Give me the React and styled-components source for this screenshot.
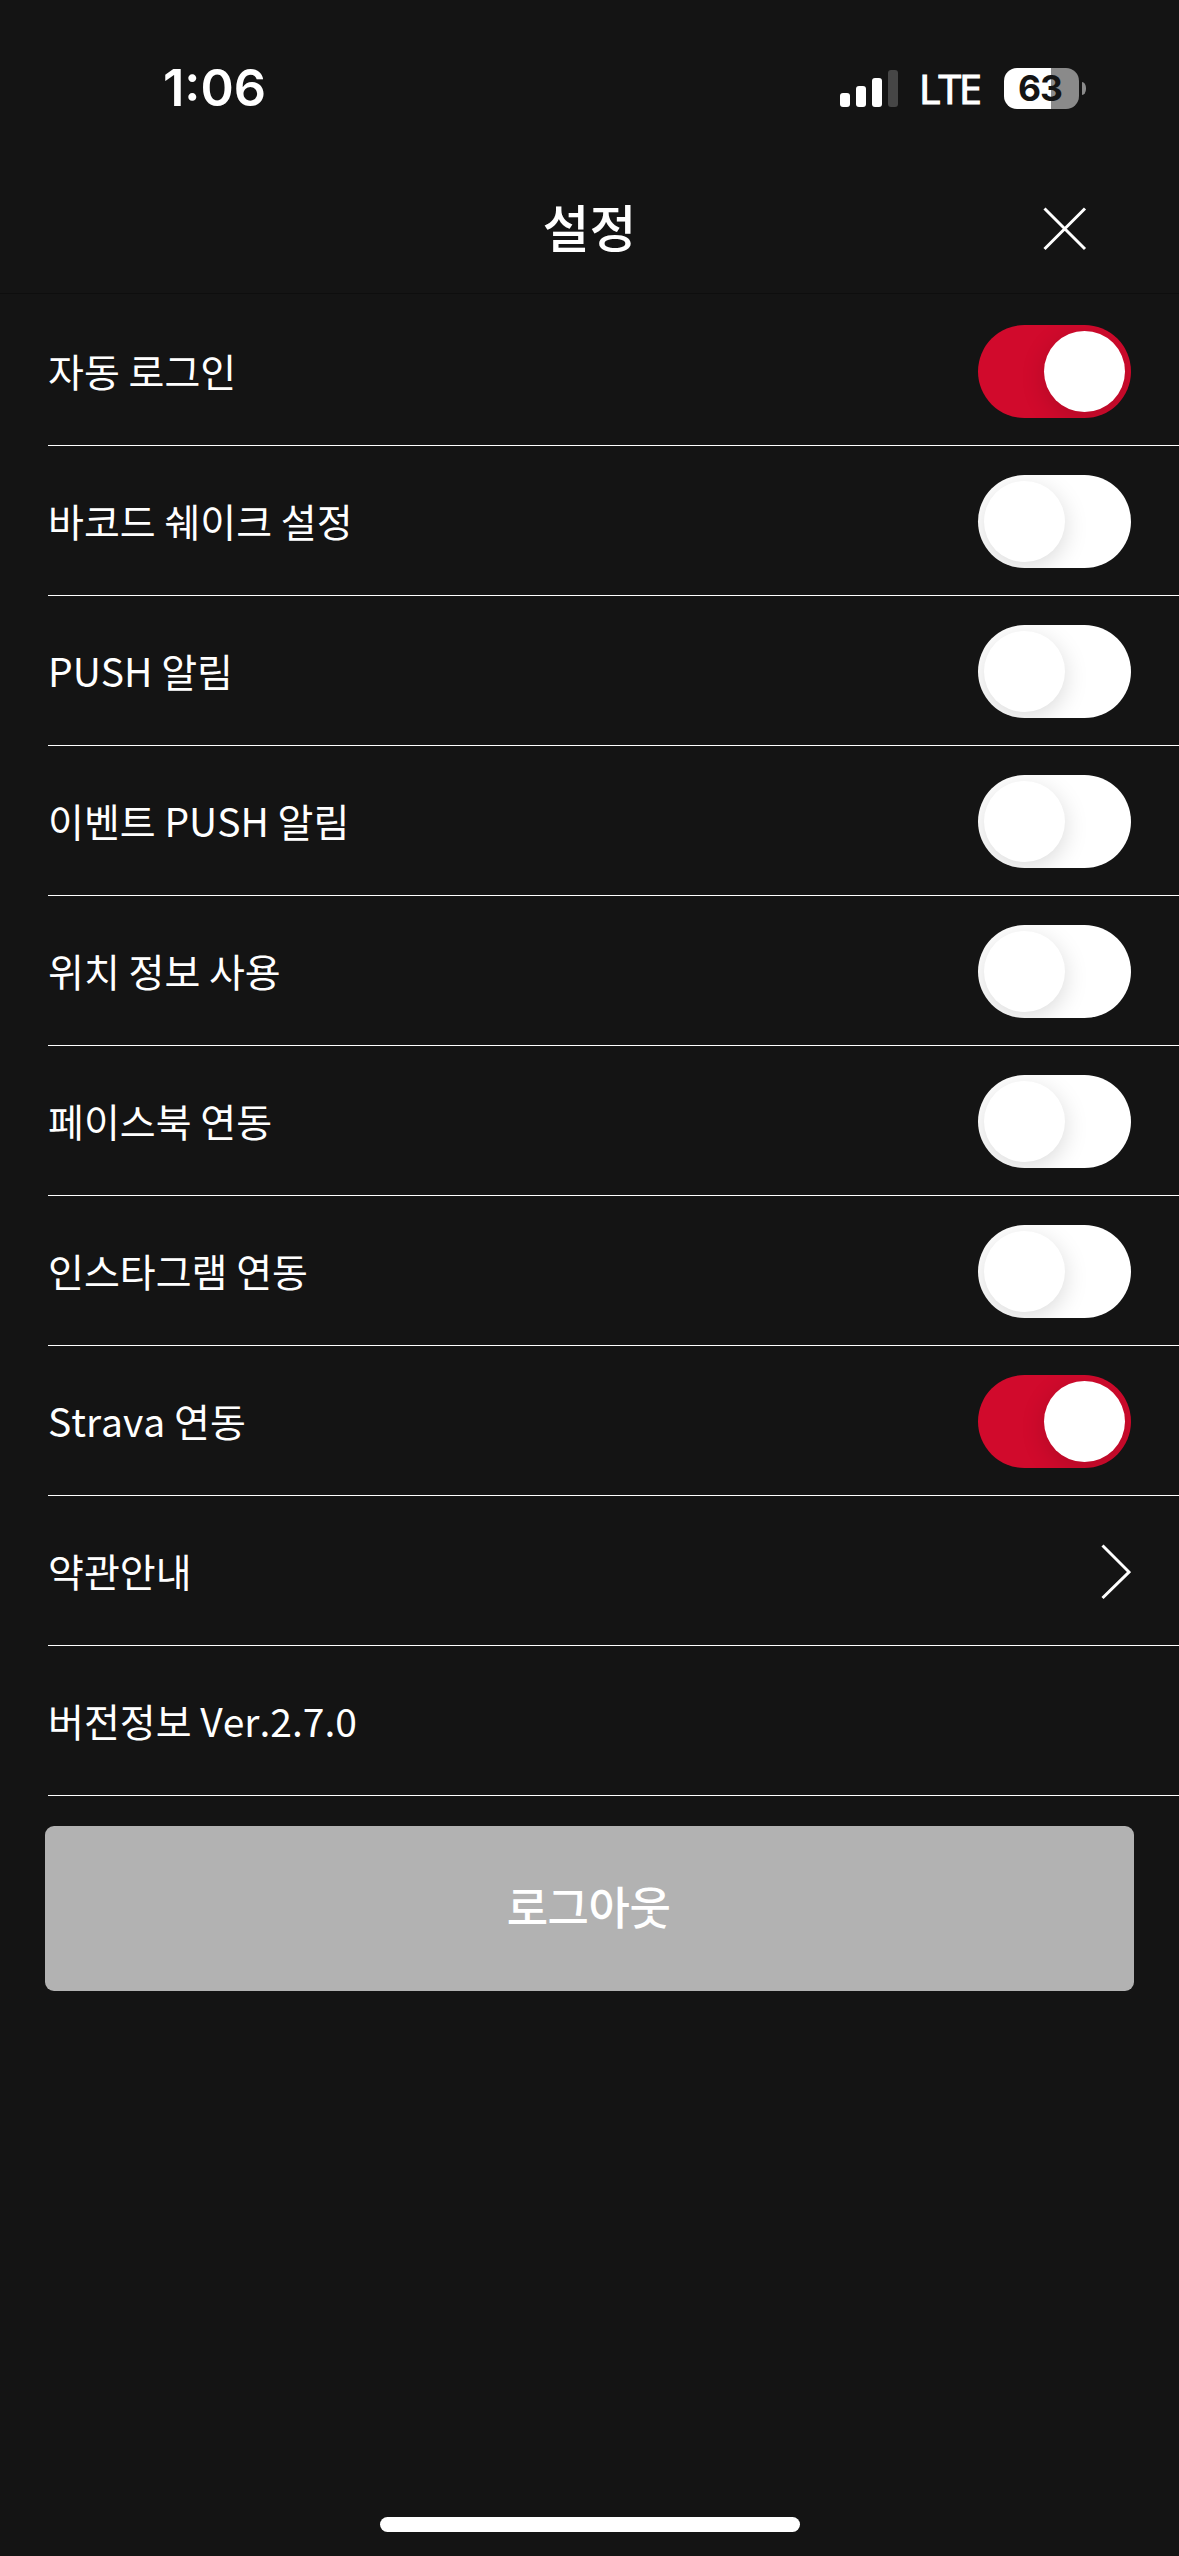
import { useState } from "react";
import styled, { createGlobalStyle } from "styled-components";

const initialSettings = [
  { id: "autoLogin", label: "자동 로그인", on: true },
  { id: "barcode", label: "바코드 쉐이크 설정", on: false },
  { id: "push", label: "PUSH 알림", on: false },
  { id: "eventPush", label: "이벤트 PUSH 알림", on: false },
  { id: "location", label: "위치 정보 사용", on: false },
  { id: "facebook", label: "페이스북 연동", on: false },
  { id: "instagram", label: "인스타그램 연동", on: false },
  { id: "strava", label: "Strava 연동", on: true },
];

const StatusBar = () => (
  <StatusWrap>
    <Time>1:06</Time>
    <StatusRight>
      <Signal>
        <Bar $height={14} />
        <Bar $height={21} />
        <Bar $height={29} />
        <Bar $height={37} $off />
      </Signal>
      <Network>LTE</Network>
      <Battery>
        <BatteryBody>63</BatteryBody>
        <BatteryTip />
      </Battery>
    </StatusRight>
  </StatusWrap>
);

export default function App() {
  const [settings, setSettings] = useState(initialSettings);

  const onToggle = (id) => {
    setSettings(settings.map((item) => (item.id === id ? { ...item, on: !item.on } : item)));
  };

  return (
    <Screen>
      <GlobalStyle />
      <StatusBar />
      <Header>
        <Title>설정</Title>
        <CloseButton aria-label="닫기">
          <svg width="44" height="44" viewBox="0 0 44 44" fill="none" stroke="#fff" strokeWidth="3">
            <path d="M1.5 1.5L42 42M42 1.5L1.5 42" />
          </svg>
        </CloseButton>
      </Header>
      <List>
        {settings.map((item) => (
          <Row key={item.id}>
            <Label>{item.label}</Label>
            <Toggle
              role="switch"
              aria-checked={item.on}
              aria-label={item.label}
              $on={item.on}
              onClick={() => onToggle(item.id)}
            >
              <Knob />
            </Toggle>
          </Row>
        ))}
        <Row>
          <Label>약관안내</Label>
          <svg width="32" height="56" viewBox="0 0 32 56" fill="none" stroke="#fff" strokeWidth="3">
            <path d="M3.5 1.5L30 28L3.5 54" />
          </svg>
        </Row>
        <Row>
          <Label>버전정보 Ver.2.7.0</Label>
        </Row>
      </List>
      <LogoutButton>로그아웃</LogoutButton>
      <HomeIndicator />
    </Screen>
  );
}

const GlobalStyle = createGlobalStyle`
  * {
    box-sizing: border-box;
  }
  body {
    margin: 0;
    background-color: #141414;
  }
  button {
    border: none;
    padding: 0;
    font-family: inherit;
    color: inherit;
    cursor: pointer;
  }
`;

const Screen = styled.div`
  width: 1179px;
  height: 2556px;
  display: flex;
  flex-direction: column;
  background-color: #141414;
  color: #ffffff;
  font-family: "Noto Sans CJK KR", "Noto Sans", sans-serif;
`;

// Status bar
const StatusWrap = styled.div`
  height: 164px;
  padding: 58px 93px 0 163px;
  display: flex;
  justify-content: space-between;
  align-items: flex-start;
  font-family: Inter, "Liberation Sans", sans-serif;
`;

const Time = styled.div`
  font-size: 50.5px;
  line-height: 60px;
  font-weight: 600;
`;

const StatusRight = styled.div`
  display: flex;
  height: 60px;
  align-items: center;
`;

const Signal = styled.div`
  display: flex;
  align-items: flex-end;
  gap: 6px;
  height: 37px;
`;

const Bar = styled.div`
  width: 10px;
  height: ${({ $height }) => $height}px;
  border-radius: 3px;
  background-color: ${({ $off }) => ($off ? "#464646" : "#ffffff")};
`;

const Network = styled.div`
  width: 61px;
  margin: 0 24px 0 21px;
  font-family: "Open Sans", "Noto Sans", sans-serif;
  font-size: 41px;
  line-height: 50px;
  letter-spacing: -2px;
  -webkit-text-stroke: 1.2px #ffffff;
`;

const Battery = styled.div`
  display: flex;
  align-items: center;
  gap: 3px;
`;

const BatteryBody = styled.div`
  width: 75px;
  height: 41px;
  padding-right: 3px;
  border-radius: 13px;
  background: linear-gradient(to right, #ffffff 47px, #8a8a8a 47px);
  color: #141414;
  font-size: 35.5px;
  line-height: 41px;
  font-weight: 700;
  letter-spacing: -1px;
  text-align: center;
`;

const BatteryTip = styled.div`
  width: 4px;
  height: 13px;
  border-radius: 0 4px 4px 0 / 0 6px 6px 0;
  background-color: #8a8a8a;
`;

// Header
const Header = styled.header`
  height: 130px;
  margin-bottom: 2px;
  padding: 0 92px;
  display: grid;
  grid-template-columns: 44px 1fr 44px;
  align-items: center;
  border-bottom: 1px solid #0e0e0e;
`;

const Title = styled.h1`
  grid-column: 2;
  margin: 0;
  padding-bottom: 5px;
  font-size: 51px;
  line-height: 74px;
  font-weight: 500;
  text-align: center;
`;

const CloseButton = styled.button`
  width: 44px;
  height: 44px;
  background: none;
  svg {
    display: block;
  }
`;

// Settings
const List = styled.div`
  padding-left: 48px;
`;

const Row = styled.div`
  height: 150px;
  padding: 2px 48px 0 0;
  display: flex;
  align-items: center;
  justify-content: space-between;
  border-bottom: 1px solid #ffffff;
`;

const Label = styled.span`
  padding-bottom: 3px;
  font-size: 39px;
  line-height: 56px;
  font-kerning: none;
`;

const Toggle = styled.button`
  width: 153px;
  height: 93px;
  padding: 6px;
  display: flex;
  justify-content: ${({ $on }) => ($on ? "flex-end" : "flex-start")};
  border-radius: 47px;
  overflow: hidden;
  background-color: ${({ $on }) => ($on ? "#d10a2c" : "#ffffff")};
`;

const Knob = styled.span`
  width: 81px;
  height: 81px;
  border-radius: 50%;
  background-color: #ffffff;
  box-shadow: 0 6px 24px rgba(0, 0, 0, 0.15);
`;

const LogoutButton = styled.button`
  height: 165px;
  margin: 30px 45px 0;
  padding: 0 2px 7px 0;
  border-radius: 9px;
  background-color: #b2b2b2;
  font-size: 45px;
  font-weight: 500;
  letter-spacing: -0.5px;
`;

const HomeIndicator = styled.div`
  width: 420px;
  height: 15px;
  margin: auto auto 24px 380px;
  border-radius: 8px;
  background-color: #ffffff;
`;
